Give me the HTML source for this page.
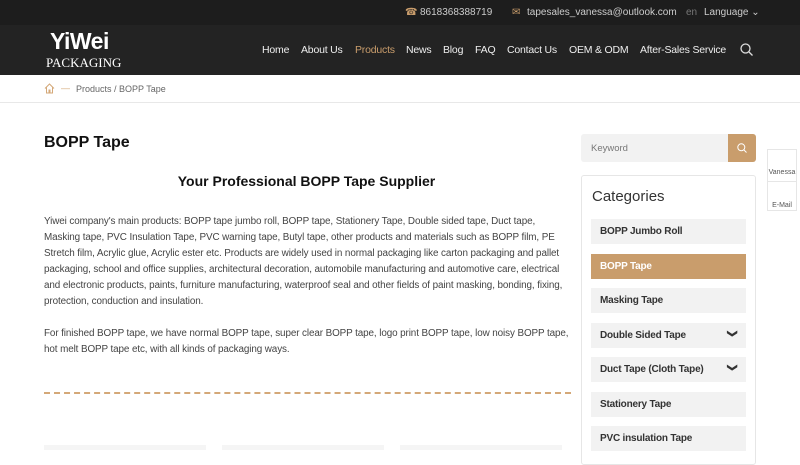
<!DOCTYPE html><html><head><meta charset="utf-8"><style>
*{margin:0;padding:0;box-sizing:border-box}
body{width:800px;height:450px;overflow:hidden;background:#fff;font-family:"Liberation Sans",sans-serif;color:#333;position:relative}
.top{position:absolute;top:0;left:0;width:800px;height:25px;background:#1d1d1d;color:#ccc;font-size:10px}
.top span{position:absolute;top:7px}
.nav{position:absolute;top:25px;left:0;width:800px;height:50px;background:#232323}
.nav a{position:absolute;top:19px;color:#eee;font-size:10.5px;text-decoration:none;letter-spacing:-.2px}
.logo1{position:absolute;left:50px;top:28px;color:#fff;font-size:23px;font-weight:bold;letter-spacing:-.5px}
.logo2{position:absolute;left:46px;top:55px;color:#fff;font-family:"Liberation Serif",serif;font-size:13px}
.bc{position:absolute;top:75px;left:0;width:800px;height:28px;border-bottom:1px solid #e8e8e8;font-size:9px;color:#666}
h1{position:absolute;left:44px;top:134px;font-size:16px;color:#111}
h2{position:absolute;left:44px;width:525px;text-align:center;top:173px;font-size:14px;color:#111}
.p{position:absolute;left:44px;width:528px;font-size:9.9px;line-height:16px;color:#444;letter-spacing:-.1px}
.dash{position:absolute;left:44px;top:392px;width:527px;border-top:2px dashed #d4a878}
.srch{position:absolute;left:581px;top:134px;width:175px;height:28px;background:#f2f2f2;border-radius:3px;font-size:9.5px;color:#777;padding:9px 10px}
.sb{position:absolute;left:728px;top:134px;width:28px;height:28px;background:#c99d6c;border-radius:0 3px 3px 0}
.cat{position:absolute;left:581px;top:175px;width:175px;height:290px;border:1px solid #e6e6e6;border-radius:3px}
.cat h3{position:absolute;left:10px;top:12px;font-weight:normal;font-size:15px;color:#333}
.it{position:absolute;left:9px;width:155px;height:25px;background:#f2f2f2;font-size:10px;font-weight:bold;color:#333;padding:7px 9px;letter-spacing:-.2px}
.it.on{background:#c99d6c;color:#fff}
.it i{position:absolute;right:10px;top:5px;font-style:normal;font-size:10px;transform:rotate(90deg)}
.side{position:absolute;left:767px;top:149px;width:30px;height:62px;border:1px solid #e6e6e6;font-size:7px;color:#555;text-align:center}
</style></head><body>
<div class="top"><span style="left:405px;color:#c99d6c">&#9742;</span><span style="left:420px">8618368388719</span><span style="left:512px;color:#c99d6c">&#9993;</span><span style="left:527px">tapesales_vanessa@outlook.com</span><span style="left:686px;color:#777">en</span><span style="left:704px">Language ⌄</span></div>
<div class="nav"><a style="left:262px">Home</a><a style="left:301px">About Us</a><a style="left:355px;color:#c99d6c">Products</a><a style="left:406px">News</a><a style="left:443px">Blog</a><a style="left:475px">FAQ</a><a style="left:507px">Contact Us</a><a style="left:569px">OEM &amp; ODM</a><a style="left:640px">After-Sales Service</a>
<svg style="position:absolute;left:740px;top:18px" width="13" height="13" viewBox="0 0 13 13" fill="none" stroke="#ddd" stroke-width="1.3"><circle cx="5.5" cy="5.5" r="4.5"/><path d="M9 9l3.5 3.5"/></svg></div>
<div class="logo1">YiWei</div><div class="logo2">PACKAGING</div>
<div class="bc"><svg style="position:absolute;left:44px;top:8px" width="11" height="11" viewBox="0 0 11 11" fill="none" stroke="#d4a878"><path d="M1 5.5L5.5 1 10 5.5M2.5 4.5V10h2.5V7h1v3h2.5V4.5"/></svg><span style="position:absolute;left:61px;top:8px;color:#d4a878">—</span><span style="position:absolute;left:76px;top:9px">Products / BOPP Tape</span></div>
<h1>BOPP Tape</h1><h2>Your Professional BOPP Tape Supplier</h2>
<div class="p" style="top:214px">Yiwei company's main products: BOPP tape jumbo roll, BOPP tape, Stationery Tape, Double sided tape, Duct tape, Masking tape, PVC Insulation Tape, PVC warning tape, Butyl tape, other products and materials such as BOPP film, PE Stretch film, Acrylic glue, Acrylic ester etc. Products are widely used in normal packaging like carton packaging and pallet packaging, school and office supplies, architectural decoration, automobile manufacturing and automotive care, electrical and electronic products, paints, furniture manufacturing, waterproof seal and other fields of paint masking, bonding, fixing, protection, conduction and insulation.</div>
<div class="p" style="top:326px">For finished BOPP tape, we have normal BOPP tape, super clear BOPP tape, logo print BOPP tape, low noisy BOPP tape, hot melt BOPP tape etc, with all kinds of packaging ways.</div>
<div class="dash"></div>
<div style="position:absolute;left:44px;top:445px;width:162px;height:5px;background:#f5f5f5"></div><div style="position:absolute;left:222px;top:445px;width:162px;height:5px;background:#f5f5f5"></div><div style="position:absolute;left:400px;top:445px;width:162px;height:5px;background:#f5f5f5"></div>
<div class="srch">Keyword</div><div class="sb"><svg style="position:absolute;left:9px;top:9px" width="10" height="10" viewBox="0 0 10 10" fill="none" stroke="#fff"><circle cx="4.3" cy="4.3" r="3.5"/><path d="M7 7l2.5 2.5"/></svg></div>
<div class="cat"><h3>Categories</h3>
<div class="it" style="top:43px">BOPP Jumbo Roll</div>
<div class="it on" style="top:78px">BOPP Tape</div>
<div class="it" style="top:112px">Masking Tape</div>
<div class="it" style="top:147px">Double Sided Tape<i>&#10095;</i></div>
<div class="it" style="top:181px">Duct Tape (Cloth Tape)<i>&#10095;</i></div>
<div class="it" style="top:216px">Stationery Tape</div>
<div class="it" style="top:250px">PVC insulation Tape</div></div>
<div class="side"><div style="margin-top:19px">Vanessa</div><div style="border-top:1px solid #e6e6e6;margin-top:5px;padding-top:20px">E-Mail</div></div>
</body></html>
